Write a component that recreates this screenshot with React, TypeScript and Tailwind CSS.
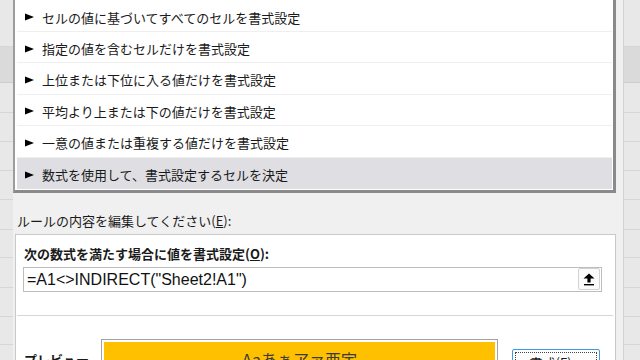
const rules = [
  "セルの値に基づいてすべてのセルを書式設定",
  "指定の値を含むセルだけを書式設定",
  "上位または下位に入る値だけを書式設定",
  "平均より上または下の値だけを書式設定",
  "一意の値または重複する値だけを書式設定",
  "数式を使用して、書式設定するセルを決定",
];

// excel row header heights behind the dialog
const sheetRows = [47, 36, 30, 29, 29, 29, 30, 28, 30, 29, 28, 30];

const jp = "font-['Noto_Sans_CJK_JP','Noto_Sans',sans-serif]";

function SheetStrip({ right }: { right?: boolean }) {
  return (
    <div
      className={
        right
          ? "w-[17px] shrink-0 flex flex-col bg-[#e8e8e8] border-l border-[#d2d2d2]"
          : "w-[13px] shrink-0 flex flex-col bg-[#e8e8e8]"
      }
    >
      {sheetRows.map((h, i) => (
        <div
          key={i}
          style={{ height: h }}
          className={
            i === 1
              ? "shrink-0 border-b border-[#cdcdcd] bg-[#dadada]"
              : "shrink-0 border-b border-[#d6d6d6]"
          }
        />
      ))}
    </div>
  );
}

function Arrow() {
  return (
    <svg width="9" height="8" viewBox="0 0 9 8" className="shrink-0">
      <path d="M0 0.6 L9 4 L0 7.4 Z" fill="#000" />
    </svg>
  );
}

function UploadIcon() {
  return (
    <svg width="12" height="13" viewBox="0 0 12 13">
      <path d="M6 0.5 L11.5 5.5 L7.6 5.5 L7.6 9.5 L4.4 9.5 L4.4 5.5 L0.5 5.5 Z" fill="#000" />
      <rect x="1" y="11" width="10" height="1.4" fill="#000" />
    </svg>
  );
}

export default function App() {
  return (
    <div className={`w-[640px] h-[360px] flex overflow-hidden bg-[#f0f0f0] ${jp}`}>
      <SheetStrip />

      <div className="flex-1 flex flex-col bg-[#f0f0f0] pr-[7px]">
        {/* rule type list */}
        <div className="bg-white border-l-2 border-l-[#9c9c9c] border-r-[3px] border-r-[#8a8a8a] border-b-[3px] border-b-[#8a8a8a] pl-[2px] pr-[1px] pt-[0.6px] pb-[1px]">
          {rules.map((r, i) => (
            <div
              key={r}
              className={
                i === rules.length - 1
                  ? "h-[31.4px] flex items-center gap-[8px] pl-[8px] pt-[3px] bg-[#dfdfe3] text-[13px] text-[#1a1a1a]"
                  : "h-[31.4px] flex items-center gap-[8px] pl-[8px] pt-[3px] border-b border-[#efefef] text-[13px] text-[#1a1a1a]"
              }
            >
              <Arrow />
              <span>{r}</span>
            </div>
          ))}
        </div>

        <div className="mt-[19px] ml-[4px] text-[13px] leading-[18px] text-[#1a1a1a]">
          ルールの内容を編集してください(<span className="underline">E</span>):
        </div>

        {/* rule description panel */}
        <div className="mt-[4px] ml-[2px] flex-1 bg-white border border-[#c9c9c9] border-b-0 pt-[10px]">
          <div className="pl-[8px] text-[13px] leading-[18px] font-bold text-[#1a1a1a]">
            次の数式を満たす場合に値を書式設定(<span className="underline">O</span>):
          </div>

          <div className="mt-[4px] ml-[7px] mr-[13px] h-[25px] flex items-center border border-[#bdbdbd] bg-white pl-[3px] pr-[1px]">
            <span className="flex-1 font-['Liberation_Sans',sans-serif] text-[16px] leading-[20px] text-[#111] pt-[2px]">
              =A1&lt;&gt;INDIRECT("Sheet2!A1")
            </span>
            <div className="w-[22px] h-[22px] flex items-center justify-center border border-[#d2d2d2] rounded-[2px] bg-[#fbfbfb]">
              <UploadIcon />
            </div>
          </div>

          <div className="mt-[23px] ml-[1px] mr-[2px] h-px bg-[#d6d6d6]" />

          <div className="mt-[23px] flex items-start">
            <div className="w-[85px] pl-[8px] pt-[12px] text-[13px] leading-[18px] font-semibold text-[#1a1a1a]">
              プレビュー
            </div>
            <div className="w-[397px] h-[40px] border border-[#a3a3a3] bg-white p-[2px]">
              <div className="h-full bg-[#ffc000] flex justify-center pt-[6px] text-[16px] leading-[22px] text-[#3a3a3a]">
                Aaあぁアァ亜宇
              </div>
            </div>
            <div className="ml-[14px] mt-[10px] w-[88px] h-[30px] border border-[#3d9be9] rounded-[2px] bg-[#fdfdfd] p-[2px]">
              <div className="h-full border border-dotted border-[#444] flex justify-center pt-[1px] text-[13px] leading-[18px] text-[#1a1a1a]">
                書式(<span className="underline">F</span>)...
              </div>
            </div>
          </div>
        </div>
      </div>

      <SheetStrip right />
    </div>
  );
}
